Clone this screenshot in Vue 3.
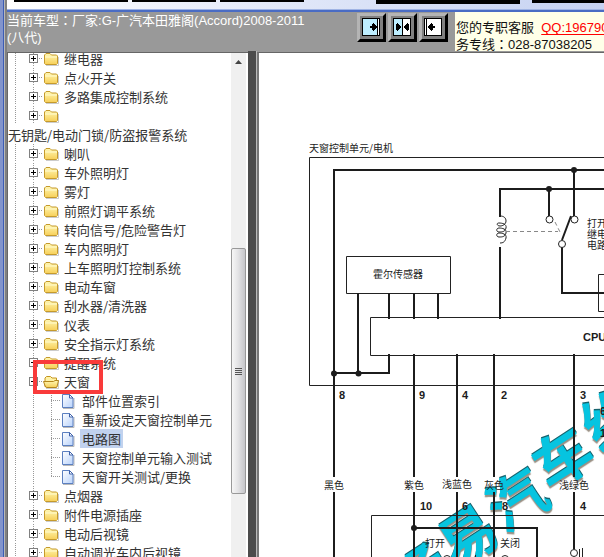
<script setup>
const modes = ['右侧', '双栏', '左侧']
const rows = [
  { t: '继电器' },
  { t: '点火开关' },
  { t: '多路集成控制系统' },
  { t: '' },
  { t: '无钥匙/电动门锁/防盗报警系统', wrap: true },
  { t: '喇叭' },
  { t: '车外照明灯' },
  { t: '雾灯' },
  { t: '前照灯调平系统' },
  { t: '转向信号/危险警告灯' },
  { t: '车内照明灯' },
  { t: '上车照明灯控制系统' },
  { t: '电动车窗' },
  { t: '刮水器/清洗器' },
  { t: '仪表' },
  { t: '安全指示灯系统' },
  { t: '提醒系统' },
  { t: '天窗', open: true },
  { t: '部件位置索引', leaf: true },
  { t: '重新设定天窗控制单元', leaf: true },
  { t: '电路图', leaf: true, selected: true },
  { t: '天窗控制单元输入测试', leaf: true },
  { t: '天窗开关测试/更换', leaf: true, last: true },
  { t: '点烟器' },
  { t: '附件电源插座' },
  { t: '电动后视镜' },
  { t: '自动调光车内后视镜' },
]
</script>

<template>
  <div class="page">
    <div class="frame"></div>
    <div class="shell">
      <div class="tabs">
        <i class="tab s1"></i><i class="tab s2"></i><i class="tab s2"></i>
        <i class="gap"></i><i class="tab s3"></i><i class="tab s4"></i>
      </div>
      <header class="head">
        <p class="car">当前车型<span class="colon">：</span>厂家:G-广汽本田雅阁(Accord)2008-2011<br />(八代)</p>
        <div class="modes">
          <button v-for="(m, i) in modes" :key="m" type="button" :aria-label="m">
            <svg width="18" height="18" viewBox="0 0 18 18" shape-rendering="crispEdges">
              <rect x="0" y="0" width="18" height="18" fill="#000" />
              <template v-if="i === 0">
                <rect x="1" y="1" width="14" height="16" fill="#bdeeff" />
                <rect x="16" y="1" width="1" height="16" fill="#fff" />
                <path d="M8 8h2V6h1V5h1v1h1v1h1v1h1v2h-1v1h-1v1h-1v1h-1v-1h-1v-2H8z" fill="#000" />
              </template>
              <template v-else-if="i === 1">
                <rect x="1" y="1" width="8" height="16" fill="#bdeeff" />
                <rect x="10" y="1" width="7" height="16" fill="#fff" />
                <path d="M3 6h1V5h1v1h1v1h1v1h1v2H7v1H6v1H5v1H4v-1H3zM16 6h-1V5h-1v1h-1v1h-1v1h-1v2h1v1h1v1h1v1h1v-1h1z" fill="#000" />
              </template>
              <template v-else>
                <rect x="1" y="1" width="1" height="16" fill="#fff" />
                <rect x="3" y="1" width="14" height="16" fill="#fff" />
                <path d="M11 8H9V6H8V5H7v1H6v1H5v1H4v2h1v1h1v1h1v1h1v-1h1v-2h2z" fill="#000" />
              </template>
            </svg>
          </button>
        </div>
        <div class="contact">您的专职客服&nbsp; <a href="#">QQ:1967906</a><br />务专线<span class="colon">：</span>028-87038205</div>
      </header>
      <div class="main">
        <nav class="side">
          <ul class="tree">
            <li v-for="(r, i) in rows" :key="i">
              <template v-if="!r.wrap">
                <i class="guide"></i>
                <i v-if="r.leaf" class="guide mid"></i>
                <span v-else class="knob">
                  <button type="button" :aria-label="'展开' + r.t">
                    <svg width="9" height="9" viewBox="0 0 9 9" shape-rendering="crispEdges">
                      <path d="M.5.5h8v8h-8z" fill="#fff" stroke="#808080" />
                      <path v-if="r.open" d="M2 4h5v1H2z" />
                      <path v-else d="M2 4h2V2h1v2h2v1H5v2H4V5H2z" />
                    </svg>
                  </button>
                </span>
                <i v-if="r.leaf" class="branch" :class="{ last: r.last }"></i>
                <svg v-if="r.leaf" class="doc" width="14" height="16" viewBox="0 0 14 16">
                  <path d="M2 15.500h11V5" fill="none" stroke="#b9b9b9" />
                  <path d="M1.500 1.500h7l3.500 3.500v9.500H1.500z" fill="url(#docFill)" stroke="#5b7fc0" />
                  <path d="M8.500 1.500V5H12z" fill="#fff" stroke="#3f62aa" />
                </svg>
                <svg v-else class="folder" width="17" height="16" viewBox="0 0 17 16">
                  <path d="M3 14.500h12.500V6" fill="none" stroke="#aaa" opacity=".6" />
                  <template v-if="r.open">
                    <path d="M2 12.500V4l1.500-1.500h4L9 4h4.500v8.500z" fill="#fff3a6" stroke="#c49520" />
                    <path d="M.500 7.500h10l1.500-1h3.500l-1.500 6.500-1 .500H4L2.500 13z" fill="url(#folderFill)" stroke="#b5861c" />
                  </template>
                  <template v-else>
                    <path d="M1.500 12.500V4L3 2.500h4L8.500 4h5l1 1v7.500l-1 1h-11z" fill="url(#folderFill)" stroke="#c59a2c" />
                    <path d="M2 6h12" stroke="#fffbd0" />
                  </template>
                </svg>
              </template>
              <a v-if="r.t" href="#" class="label" :class="{ selected: r.selected, wrap: r.wrap }">{{ r.t }}</a>
              <i v-if="r.open" class="mark"></i>
            </li>
          </ul>
          <div class="scroll">
            <svg class="up" width="7" height="4" viewBox="0 0 7 4"><path d="M0 4L3.500 0 7 4z" fill="#444" /></svg>
            <div class="thumb"><i></i><i></i><i></i><i></i></div>
          </div>
        </nav>
        <div class="split"></div>
        <section class="view">
          <svg class="diagram" width="345" height="504" viewBox="259 53 345 504">
            <defs>
              <linearGradient id="docFill" x1="0" y1="0" x2="1" y2="1">
                <stop offset="0" stop-color="#fff" /><stop offset="1" stop-color="#b8d2fb" />
              </linearGradient>
              <linearGradient id="folderFill" x1="0" y1="0" x2="0" y2="1">
                <stop offset="0" stop-color="#fff8b4" /><stop offset="1" stop-color="#f7cf58" />
              </linearGradient>
            </defs>
            <text class="stamp" x="408 455 504 550 599" y="609 570 534 492 452" rotate="-33">畅易汽车维</text>
            <g class="thin">
              <path d="M604 157.500H309.500V385.500H604" />
              <path d="M346.500 256.500h104v37h-104z" />
              <path d="M604 317.500H370.500V355.500H604" />
              <path d="M604 274.500h-5.500v37h5.500" />
              <path d="M371.500 557V515.500H604" />
              <path d="M579.500 549v8M582.500 548v9M475.500 555v2" />
              <path d="M500 216c4 0 6 2 6 5s-3 5-6 5-4-3-1-3 8 1 7 5-4 4-7 4-3-4 0-4 8 1 7 5-4 4-7 4-3-4 0-4 8 1 7 5-3 5-6 5" />
              <path d="M506 231.500h52M555 222l5 10" class="dash" />
            </g>
            <g class="wire">
              <path d="M604 170H334V477M334 492V557" />
              <path d="M604 189H500V217M500 247V319" />
              <path d="M549 189V216M574 170V216M571 216L562 240M562 247V293H604" />
              <path d="M358 293V373M389 293V319M414 293V319M438 293V319M389 354V373H334" />
              <path d="M414 354V477M414 492V557M457 354V477M457 492V557M494 354V477M494 492V557M574 354V477M574 492V549" />
              <path d="M414 528H537V557" />
            </g>
            <g class="dots">
              <circle cx="574" cy="170" r="3" /><circle cx="549" cy="189" r="3" />
              <circle cx="334" cy="373.500" r="3" /><circle cx="358.500" cy="373.500" r="3" />
              <circle cx="414" cy="528" r="3" />
            </g>
            <g class="rings">
              <circle cx="549.500" cy="219.500" r="3.500" /><circle cx="574.500" cy="219.500" r="3.500" />
              <circle cx="562" cy="244" r="3.500" /><circle cx="574" cy="553" r="3.500" />
              <circle cx="447" cy="559" r="3.500" /><circle cx="505" cy="559" r="3.500" />
            </g>
            <g class="cn">
              <text x="309" y="152">天窗控制单元/电机</text>
              <text x="373" y="278">霍尔传感器</text>
              <text y="227"><tspan x="587">打开</tspan><tspan x="587" dy="11">继电器</tspan><tspan x="587" dy="11">电路</tspan></text>
              <text x="324" y="489">黑色</text>
              <text x="404" y="489">紫色</text>
              <text x="442" y="488">浅蓝色</text>
              <text x="484" y="489">灰色</text>
              <text x="559" y="489">浅绿色</text>
              <text x="425" y="547">打开</text>
              <text x="500" y="547">关闭</text>
            </g>
            <g class="num">
              <text x="583" y="341">CPU</text>
              <text x="339" y="399">8</text><text x="419" y="399">9</text>
              <text x="462" y="399">4</text><text x="501" y="399">2</text>
              <text x="580" y="399">3</text>
              <text x="420" y="510">10</text><text x="462" y="510">6</text>
              <text x="502" y="510">8</text><text x="580" y="510">4</text>
              <text x="600" y="415">6</text><text x="600" y="437">1</text>
            </g>
          </svg>
        </section>
      </div>
    </div>
  </div>
</template>

<style>
body { overflow: hidden; }
</style>

<style scoped>
* { box-sizing: border-box; }
.page {
  display: flex;
  height: 100vh;
  overflow: hidden;
  font: 13px/17px "Liberation Sans", "Noto Sans CJK SC", sans-serif;
}
.frame {
  flex: none;
  width: 7px;
  background: linear-gradient(90deg, #8294cc 0 3px, #3c5cb4 3px 4px, #b8b8b8 4px 5px, #808080 5px 7px);
}
.shell { flex: 1; min-width: 0; display: flex; flex-direction: column; }
.tabs {
  display: flex;
  gap: 4px;
  height: 12px;
  padding-left: 7px;
  background: linear-gradient(180deg, transparent 9px, #a0b4e4 9px 10px, #4a6cc4 10px 12px), linear-gradient(90deg, #fff, #dfe6f8 50%, #c6d2f2);
}
.tab { flex: none; height: 2px; background: #000; }
.s1 { width: 114px; }
.s2 { width: 84px; }
.gap { width: 64px; }
.s3 { width: 144px; height: 4px; margin-right: 8px; }
.s4 { flex: 1; height: 3px; }
.head { display: flex; height: 40px; background: #999; }
.car { flex: none; width: 350px; margin: 0; color: #fff; white-space: nowrap; }
.colon { font-family: "Noto Sans CJK TC", sans-serif; line-height: 1; }
.modes { display: flex; gap: 2px; padding-top: 1px; }
.modes button {
  width: 29px;
  height: 29px;
  padding: 2px 3px 3px 2px;
  background: #808080;
  border: 3px solid;
  border-color: #b4b4b4 #000 #000 #b4b4b4;
}
.modes svg { display: block; }
.contact {
  flex: 1;
  min-width: 0;
  height: 39px;
  margin-left: 7px;
  padding: 7px 0 0 1px;
  overflow: hidden;
  white-space: nowrap;
  background: #ffffe8;
  color: #111;
}
.contact a { color: #f00; text-underline-offset: 2px; text-decoration: underline #f00; }
.main { flex: 1; min-height: 0; display: flex; }
.side {
  flex: none;
  display: flex;
  width: 241px;
  overflow: hidden;
  border-top: 1px solid #666;
  border-left: 1px solid #666;
  background: #fff;
}
.tree { flex: 1; min-width: 0; margin: -4px 0 0; padding: 0; list-style: none; }
.tree li { position: relative; display: flex; align-items: center; height: 19px; white-space: nowrap; }
.guide {
  flex: none;
  width: 16px;
  height: 19px;
  background: repeating-linear-gradient(180deg, #999 0 1px, transparent 1px 2px) 7px 0 / 1px 18px no-repeat;
}
.guide.mid { width: 20px; background-position: 9px 0; }
.knob {
  flex: none;
  width: 19px;
  height: 19px;
  padding: 5px;
  background:
    repeating-linear-gradient(180deg, #999 0 1px, transparent 1px 2px) 9px 0 / 1px 18px no-repeat,
    repeating-linear-gradient(90deg, #999 0 1px, transparent 1px 2px) 9px 9px / 10px 1px no-repeat;
}
.knob button { display: block; width: 9px; height: 9px; padding: 0; border: 0; background: none; }
.knob svg { display: block; }
.folder { flex: none; margin-right: 4px; }
.branch {
  flex: none;
  width: 17px;
  height: 19px;
  background:
    repeating-linear-gradient(180deg, #999 0 1px, transparent 1px 2px) 7px 0 / 1px 18px no-repeat,
    repeating-linear-gradient(90deg, #999 0 1px, transparent 1px 2px) 7px 9px / 10px 1px no-repeat;
}
.branch.last { background-size: 1px 10px, 10px 1px; }
.doc { flex: none; margin-right: 7px; }
.label {
  height: 19px;
  padding: 0 2px;
  margin-left: -2px;
  line-height: 19px;
  color: #333;
  font-family: "Noto Sans CJK SC", sans-serif;
  text-decoration: none;
}
.label.wrap { margin-left: 0; padding: 0; }
.label.selected { background: #c1d2ee; }
.mark {
  position: absolute;
  left: 25px;
  top: -12px;
  z-index: 1;
  width: 70px;
  height: 34px;
  border: 4px solid #f93a3a;
}
.scroll { flex: none; width: 17px; padding-right: 2px; background: #f0f0f0; border-right: 2px solid #fff; }
.up { display: block; margin: 7px 0 0 4px; }
.thumb {
  display: flex;
  flex-direction: column;
  align-items: center;
  justify-content: center;
  gap: 1px;
  width: 15px;
  height: 246px;
  margin-top: 184px;
  border: 1px solid #999;
  border-radius: 2px;
  background: linear-gradient(90deg, #f6f6f6, #e4e4e6 45%, #c6c6ca);
}
.thumb i { width: 7px; height: 1px; background: #555; }
.split { flex: none; width: 9px; margin-top: -1px; background: #4c4c4c; border-right: 1px solid #bbb; }
.view {
  flex: 1;
  min-width: 0;
  overflow: hidden;
  border-top: 1px solid #666;
  border-left: 2px solid #777;
  background: #fff;
}
.diagram { display: block; }
.thin { fill: none; stroke: #222; stroke-width: 1; }
.dash { stroke: #888; stroke-dasharray: 4 3; }
.wire { fill: none; stroke: #1c1c1c; stroke-width: 2; }
.dots { fill: #1c1c1c; }
.rings { fill: #fff; stroke: #222; }
.cn { font: 10px "Noto Sans CJK SC", sans-serif; fill: #222; }
.num { font: bold 11px "Liberation Sans", sans-serif; fill: #1c1c1c; }
.stamp {
  font: bold 58px "Noto Sans CJK SC", sans-serif;
  fill: #06c4e0;
  text-shadow: -1px 2px 1px #9a9084, 1px -1px 0 #17636e;
}
</style>
